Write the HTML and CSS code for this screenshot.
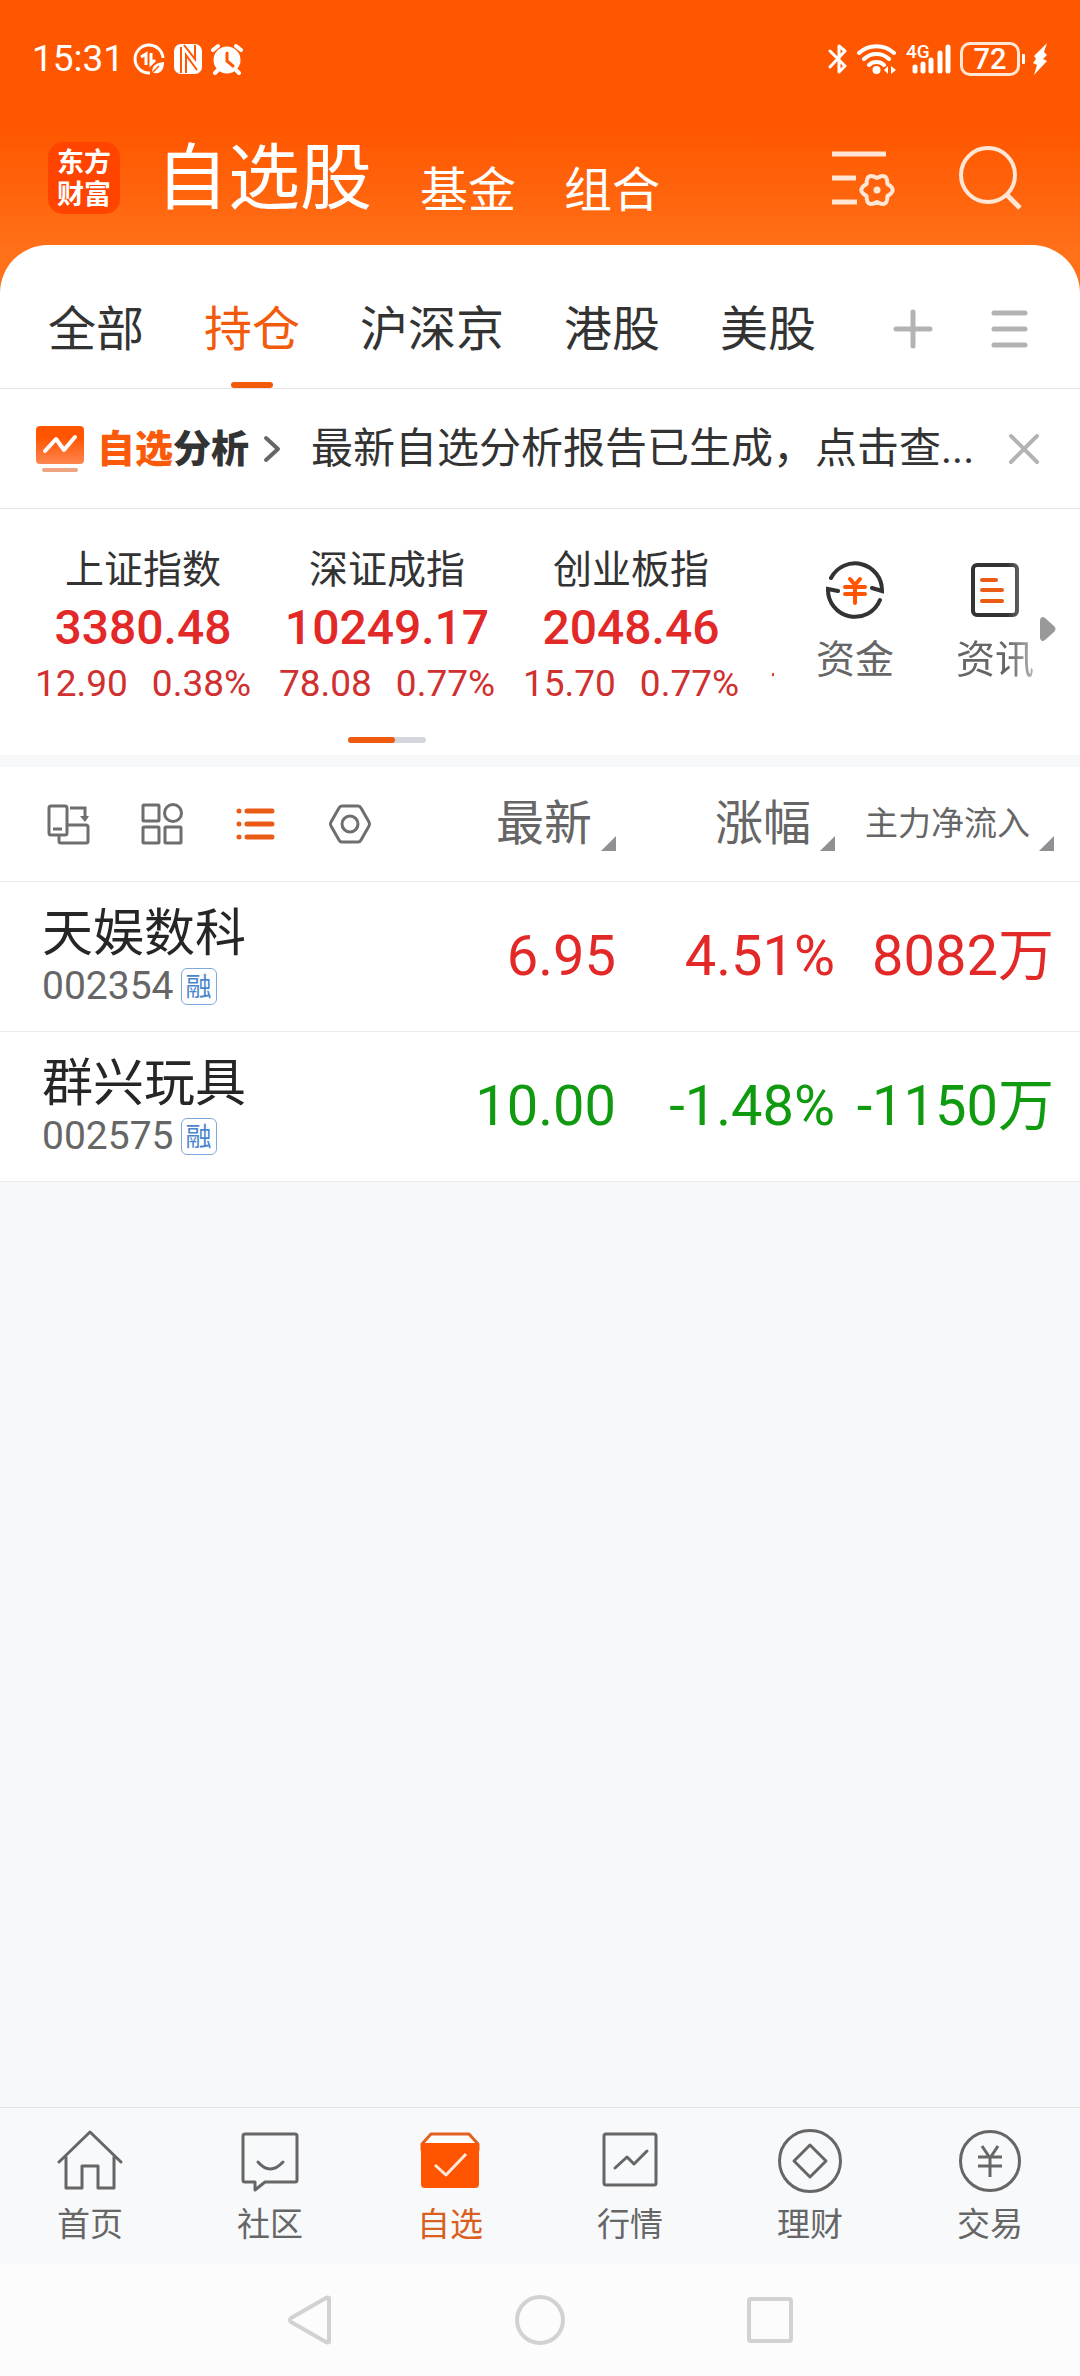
FILE: index.html
```html
<!DOCTYPE html>
<html lang="zh-CN">
<head>
    <meta charset="UTF-8">
    <meta name="viewport" content="width=device-width, initial-scale=1.0">
    <title>自选股</title>
    <link rel="stylesheet" href="styles.css">
</head>
<body>
    <header class="top">
        <div class="status-bar">
            <div class="status-left">
                <span class="time">15:31</span>
                <svg width="32" height="32" viewBox="0 0 32 32" fill="none" stroke="#fff" stroke-width="3">
                    <path d="M30 15A14 14 0 1 0 17 30"/>
                    <path d="M8 14l5-3v11M18 10v11l4-4"/>
                    <path d="M19 30c0-8 4-10 12-11 0 7-3 12-9 11z" fill="#fff" stroke="none"/>
                    <path d="M18 31l8-8" stroke="#ff5700" stroke-width="1.5"/>
                </svg>
                <svg width="28" height="30" viewBox="0 0 28 30">
                    <rect width="28" height="30" rx="7" fill="#fff"/>
                    <path d="M7 3v26M10 1l11 14V1M12 29V11l11 15" stroke="#ff5700" stroke-width="2" fill="none"/>
                </svg>
                <svg width="32" height="32" viewBox="0 0 32 32" fill="none" stroke="#fff" stroke-width="4" stroke-linecap="round">
                    <circle cx="16" cy="17" r="13.500" fill="#fff" stroke="none"/>
                    <path d="M2 7l5-4M30 7l-5-4M7 27l-3 3M25 27l3 3"/>
                    <path d="M16 10v8l6 5" stroke="#ff5700" stroke-width="3"/>
                </svg>
            </div>
            <div class="status-right">
                <svg width="20" height="32" viewBox="0 0 20 32" fill="none" stroke="#fff" stroke-width="3" stroke-linecap="round" stroke-linejoin="round">
                    <path d="M2 8l15 15-6 6V3l6 5L2 24"/>
                </svg>
                <svg width="40" height="32" viewBox="0 0 40 32" fill="none" stroke="#fff" stroke-width="4" stroke-linecap="round">
                    <path d="M2 10a26 26 0 0 1 35 0M7 16a18 18 0 0 1 25 0M12 22a11 11 0 0 1 15 0"/>
                    <circle cx="19.500" cy="27" r="4" fill="#fff" stroke="none"/>
                    <path d="M31 23v8l-4-4zM34 23v8l5-4z" fill="#fff" stroke="none"/>
                </svg>
                <div class="signal">
                    <span class="network">4G</span>
                    <svg width="40" height="32" viewBox="0 0 40 32" stroke="#fff" stroke-width="5" stroke-linecap="round">
                        <path d="M4 24v4M12 21v7M20 17v11M29 10v18M37 4v24"/>
                    </svg>
                </div>
                <div class="battery">72</div>
                <svg width="26" height="34" viewBox="0 0 26 34" fill="#fff">
                    <rect x="0" y="12" width="3" height="10" rx="1"/>
                    <path d="M25 1L12 14l2 3-3 4 4 2-3 10 13-14-4-2 4-4-3-3z"/>
                </svg>
            </div>
        </div>
        <div class="title-bar">
            <div class="logo">东方财富</div>
            <nav class="titles">
                <h1>自选股</h1>
                <a href="#">基金</a>
                <a href="#">组合</a>
            </nav>
            <div class="title-actions">
                <button aria-label="设置">
                    <svg width="64" height="64" viewBox="0 0 64 64" fill="none" stroke="#ffe6d5" stroke-width="5">
                        <path d="M0 8h54M0 32h24M0 56h25"/>
                        <path d="M55.400 50Q55.500 62.200 45 56 34.500 62.200 34.600 50 24 44 34.600 38 34.500 25.800 45 32 55.500 25.800 55.400 38 66 44 55.400 50z" stroke-width="4" stroke-linejoin="round"/>
                        <circle cx="45" cy="44" r="3.500" fill="#ffe6d5" stroke="none"/>
                    </svg>
                </button>
                <button aria-label="搜索">
                    <svg width="64" height="64" viewBox="0 0 64 64" fill="none" stroke="#ffe6d5" stroke-width="4">
                        <circle cx="30" cy="29" r="27"/>
                        <path d="M48 48l14 14" stroke-width="5"/>
                    </svg>
                </button>
            </div>
        </div>
    </header>

    <main class="sheet">
        <nav class="tabs">
            <a href="#">全部</a>
            <a href="#" class="active">持仓</a>
            <a href="#">沪深京</a>
            <a href="#">港股</a>
            <a href="#">美股</a>
            <div class="tab-actions">
                <button aria-label="添加">
                    <svg width="40" height="40" viewBox="0 0 40 40" stroke="#b3b3b3" stroke-width="5" stroke-linecap="round">
                        <path d="M20 3v34M3 20h34"/>
                    </svg>
                </button>
                <button aria-label="菜单">
                    <svg width="40" height="40" viewBox="0 0 40 40" stroke="#b3b3b3" stroke-width="5" stroke-linecap="round">
                        <path d="M5 4h31M5 20h31M5 36h31"/>
                    </svg>
                </button>
            </div>
        </nav>

        <section class="notice">
            <svg width="48" height="48" viewBox="0 0 48 48" fill="none">
                <defs>
                    <linearGradient id="board" x1="0" y1="0" x2="0" y2="1">
                        <stop offset=".3" stop-color="#ff5500"/>
                        <stop offset="1" stop-color="#ff8650"/>
                    </linearGradient>
                </defs>
                <rect x="0" y="1" width="48" height="38" rx="4" fill="url(#board)"/>
                <path d="M9 26l11-12 8 11 11-13" stroke="#fff" stroke-width="4" stroke-linecap="round" stroke-linejoin="round"/>
                <rect x="6" y="43" width="36" height="4" rx="2" fill="#f0a582"/>
            </svg>
            <strong class="notice-title"><span>自选</span>分析</strong>
            <svg class="chevron" width="18" height="28" viewBox="0 0 18 28" fill="none" stroke="#666" stroke-width="4" stroke-linecap="round" stroke-linejoin="round">
                <path d="M3 3l12 11L3 25"/>
            </svg>
            <a href="#" class="notice-text">最新自选分析报告已生成，点击查...</a>
            <button aria-label="关闭">
                <svg width="32" height="32" viewBox="0 0 32 32" stroke="#b3b3b3" stroke-width="4" stroke-linecap="round">
                    <path d="M3 3l26 26M29 3L3 29"/>
                </svg>
            </button>
        </section>

        <section class="market">
            <div class="indexes">
                <div class="index-list">
                    <div class="index">
                        <div class="index-name">上证指数</div>
                        <div class="index-value">3380.48</div>
                        <div class="index-change"><span>12.90</span><span>0.38%</span></div>
                    </div>
                    <div class="index">
                        <div class="index-name">深证成指</div>
                        <div class="index-value">10249.17</div>
                        <div class="index-change"><span>78.08</span><span>0.77%</span></div>
                    </div>
                    <div class="index">
                        <div class="index-name">创业板指</div>
                        <div class="index-value">2048.46</div>
                        <div class="index-change"><span>15.70</span><span>0.77%</span></div>
                    </div>
                    <div class="index index-next">
                        <div class="index-change">1</div>
                    </div>
                </div>
                <div class="pager"><span></span></div>
            </div>
            <div class="shortcuts">
                <a href="#" class="shortcut">
                    <svg width="60" height="60" viewBox="0 0 60 60" fill="none" stroke="#333" stroke-width="4" stroke-linecap="round">
                        <path d="M6 18A27 27 0 0 1 57 31l-10-3"/>
                        <path d="M55 40A27 27 0 0 1 3 29l10 2"/>
                        <path d="M25 19l5 6 5-6M20 27h20M20 34h20M30 26v17" stroke="#ff5500"/>
                    </svg>
                    <span>资金</span>
                </a>
                <a href="#" class="shortcut fade">
                    <svg width="60" height="60" viewBox="0 0 60 60" fill="none" stroke="#333" stroke-width="4" stroke-linecap="round">
                        <rect x="8" y="5" width="44" height="50" rx="4"/>
                        <path d="M17 20h14M17 30h20M17 41h20" stroke="#ea5b16"/>
                    </svg>
                    <span>资讯</span>
                </a>
                <svg class="more" width="16" height="26" viewBox="0 0 16 26" fill="#999">
                    <path d="M0 4Q1-1 5 2l9 8q3 3 0 6l-9 8q-4 3-5-2z"/>
                </svg>
            </div>
        </section>

        <table class="stocks">
            <colgroup>
                <col>
                <col class="col-price">
                <col class="col-price">
                <col class="col-flow">
            </colgroup>
            <thead>
                <tr>
                    <th>
                        <div class="views">
                            <button aria-label="切换横屏">
                                <svg width="44" height="44" viewBox="0 0 44 44" fill="none" stroke="#6e6e6e" stroke-width="3">
                                    <rect x="3" y="4" width="18" height="29" rx="2"/>
                                    <path d="M7 27h9M24 6h15v9M21 23h19q2 0 2 2v14q0 2-2 2H15q-2 0-2-2v-6"/>
                                    <path d="M34 14h9l-4 6z" fill="#6e6e6e" stroke="none"/>
                                </svg>
                            </button>
                            <button aria-label="宫格">
                                <svg width="44" height="44" viewBox="0 0 44 44" fill="none" stroke="#6e6e6e" stroke-width="3">
                                    <rect x="3" y="3" width="16" height="16" rx="1"/>
                                    <circle cx="33" cy="11" r="8.500"/>
                                    <rect x="3" y="25" width="16" height="16" rx="1"/>
                                    <rect x="25" y="25" width="16" height="16" rx="1"/>
                                </svg>
                            </button>
                            <button aria-label="列表">
                                <svg width="44" height="44" viewBox="0 0 44 44" fill="none" stroke="#ea5b16" stroke-width="5" stroke-linecap="round">
                                    <path d="M5 9h0M13 9h25M5 22h0M13 22h25M5 35h0M13 35h25"/>
                                </svg>
                            </button>
                            <button aria-label="设置">
                                <svg width="44" height="44" viewBox="0 0 44 44" fill="none" stroke="#6e6e6e" stroke-width="3" stroke-linejoin="round">
                                    <path d="M14 4h16q2 0 3 2l8 14q1 2 0 4l-8 14q-1 2-3 2H14q-2 0-3-2L3 24q-1-2 0-4l8-14q1-2 3-2z"/>
                                    <circle cx="22" cy="22" r="8"/>
                                </svg>
                            </button>
                        </div>
                    </th>
                    <th><button class="sort">最新<i></i></button></th>
                    <th><button class="sort">涨幅<i></i></button></th>
                    <th><button class="sort sort-long">主力净流入<i></i></button></th>
                </tr>
            </thead>
            <tbody>
                <tr class="up">
                    <td>
                        <div class="stock-name">天娱数科</div>
                        <div class="stock-code">002354<span class="badge">融</span></div>
                    </td>
                    <td>6.95</td>
                    <td>4.51%</td>
                    <td>8082万</td>
                </tr>
                <tr class="down">
                    <td>
                        <div class="stock-name">群兴玩具</div>
                        <div class="stock-code">002575<span class="badge">融</span></div>
                    </td>
                    <td>10.00</td>
                    <td>-1.48%</td>
                    <td>-1150万</td>
                </tr>
            </tbody>
        </table>
    </main>

    <nav class="bottom-nav">
        <a href="#">
            <svg width="66" height="66" viewBox="0 0 66 66" fill="none" stroke="#666" stroke-width="3" stroke-linecap="round" stroke-linejoin="round">
                <path d="M2 34L33 4l31 30M9 29v31h16V38h16v22h16V29"/>
            </svg>
            <span>首页</span>
        </a>
        <a href="#">
            <svg width="66" height="66" viewBox="0 0 66 66" fill="none" stroke="#666" stroke-width="3" stroke-linecap="round" stroke-linejoin="round">
                <path d="M8 6h50q2 0 2 2v44q0 2-2 2H28l-10 8v-8H8q-2 0-2-2V8q0-2 2-2z"/>
                <path d="M21 34q12 14 25 0"/>
            </svg>
            <span>社区</span>
        </a>
        <a href="#" class="active">
            <svg width="66" height="66" viewBox="0 0 66 66" fill="none" stroke-linejoin="round">
                <path d="M5 16l9-10h38l9 10v6H5z" fill="#fff" stroke="#e2601f" stroke-width="3"/>
                <path d="M4 15h58v41q0 4-4 4H8q-4 0-4-4z" fill="#ff5500"/>
                <path d="M18 37l11 10 20-21" stroke="#ffe9dc" stroke-width="3"/>
            </svg>
            <span>自选</span>
        </a>
        <a href="#">
            <svg width="66" height="66" viewBox="0 0 66 66" fill="none" stroke="#666" stroke-width="3" stroke-linecap="round" stroke-linejoin="round">
                <rect x="7" y="6" width="52" height="51" rx="2"/>
                <path d="M18 40l12-11 7 7 13-13"/>
            </svg>
            <span>行情</span>
        </a>
        <a href="#">
            <svg width="66" height="66" viewBox="0 0 66 66" fill="none" stroke="#666" stroke-width="3" stroke-linejoin="round">
                <circle cx="33" cy="33" r="30.500"/>
                <path d="M33 17l16 16-16 16-16-16z"/>
            </svg>
            <span>理财</span>
        </a>
        <a href="#">
            <svg width="66" height="66" viewBox="0 0 66 66" fill="none" stroke="#666" stroke-width="3">
                <circle cx="33" cy="33" r="29.500"/>
                <path d="M25 18l8 12 8-12M21 29h24M21 38h24M33 29v20"/>
            </svg>
            <span>交易</span>
        </a>
    </nav>

    <div class="system-nav">
        <button aria-label="返回">
            <svg width="52" height="52" viewBox="0 0 52 52" fill="none" stroke="#d2d2d2" stroke-width="4" stroke-linejoin="round">
                <path d="M45 4v44q-1 1-3 0L7 28q-2-2 0-4L42 4q2-1 3 0z"/>
            </svg>
        </button>
        <button aria-label="主屏幕">
            <svg width="52" height="52" viewBox="0 0 52 52" fill="none" stroke="#d2d2d2" stroke-width="4">
                <circle cx="26" cy="26" r="23"/>
            </svg>
        </button>
        <button aria-label="最近任务">
            <svg width="52" height="52" viewBox="0 0 52 52" fill="none" stroke="#d2d2d2" stroke-width="4">
                <rect x="5" y="5" width="42" height="42" rx="2"/>
            </svg>
        </button>
    </div>
</body>
</html>
```

FILE: styles.css
```css
* {
    box-sizing: border-box;
}

body {
    margin: 0;
    min-height: 100vh;
    display: flex;
    flex-direction: column;
    background-color: #f6f8fa;
    color: #333;
    font-family: Roboto, "Noto Sans CJK SC", sans-serif;
}

a {
    color: inherit;
    text-decoration: none;
}

button {
    display: block;
    padding: 0;
    border: none;
    background: none;
    color: inherit;
    font: inherit;
    cursor: pointer;
}

svg {
    display: block;
    flex-shrink: 0;
}

/* header */
.top {
    padding-bottom: 48px;
    background: linear-gradient(#ff5700 130px, #ff7018 250px);
    color: #fff;
}

.status-bar {
    height: 118px;
    padding: 0 32px;
    display: flex;
    justify-content: space-between;
    align-items: center;
}

.status-left,
.status-right {
    display: flex;
    align-items: center;
    gap: 9px;
}

.time {
    font-size: 37px;
    line-height: 40px;
}

.signal {
    position: relative;
    padding-left: 5px;
}

.network {
    position: absolute;
    left: 0;
    top: 0;
    font-size: 19px;
    font-weight: 500;
    line-height: 18px;
}

.battery {
    width: 60px;
    height: 34px;
    border: 3px solid #ffe6d5;
    border-radius: 10px;
    font-size: 29px;
    font-weight: 500;
    line-height: 29px;
    text-align: center;
    margin-right: -7px;
}

.title-bar {
    height: 127px;
    padding: 0 58px 8px 48px;
    display: flex;
    align-items: center;
}

.logo {
    width: 72px;
    height: 72px;
    padding: 5px 9px;
    border-radius: 15px;
    background-color: #ff4400;
    font-size: 27px;
    font-weight: 700;
    line-height: 32px;
}

.titles {
    margin-left: 36px;
    padding-bottom: 12px;
    display: flex;
    align-items: flex-end;
    gap: 48px;
    font-family: "Noto Sans CJK SC", sans-serif;
    font-size: 48px;
    line-height: 44px;
}

.titles h1 {
    margin: 0;
    font-size: 72px;
    font-weight: 400;
    line-height: 72px;
}

.title-actions {
    margin-left: auto;
    display: flex;
    gap: 62px;
}

/* tabs */
.sheet {
    margin-top: -48px;
    flex-grow: 1;
}

.tabs {
    height: 144px;
    padding: 0 51px 0 48px;
    display: flex;
    gap: 60px;
    background-color: #fff;
    border-bottom: 1px solid #e3e3e3;
    border-radius: 48px 48px 0 0;
    font-size: 48px;
    line-height: 170px;
}

.tabs a {
    position: relative;
}

.tabs .active {
    color: #f25a0c;
}

.tabs .active::after {
    content: "";
    position: absolute;
    left: 50%;
    bottom: 0;
    width: 42px;
    height: 6px;
    margin-left: -21px;
    border-radius: 3px;
    background-color: #f25a0c;
}

.tab-actions {
    height: 168px;
    margin-left: auto;
    display: flex;
    align-items: center;
    gap: 56px;
}

/* notice */
.notice {
    height: 120px;
    padding: 0 40px 0 36px;
    display: flex;
    align-items: center;
    background-color: #fff;
    border-bottom: 1px solid #e3e3e3;
    line-height: 56px;
}

.notice-title {
    margin-left: 13px;
    font-size: 38px;
    font-weight: 900;
}

.notice-title span {
    color: #fa5a0a;
}

.chevron {
    margin-left: 14px;
}

.notice-text {
    flex: 1;
    min-width: 0;
    margin-left: 30px;
    overflow: hidden;
    white-space: nowrap;
    font-size: 42px;
}

/* market */
.market {
    height: 246px;
    display: flex;
    justify-content: space-between;
    background-color: #fff;
}

.indexes {
    width: 774px;
    padding: 0 21px;
    overflow: hidden;
    text-align: center;
}

.index-list {
    padding-top: 32px;
    display: flex;
}

.index {
    flex: 0 0 244px;
}

.index-next {
    align-self: flex-end;
    padding-left: 16px;
}

.index-name {
    font-size: 39px;
    line-height: 58px;
}

.index-value {
    color: #e32828;
    font-size: 48px;
    font-weight: 500;
    line-height: 58px;
}

.index-change {
    display: flex;
    justify-content: center;
    gap: 24px;
    color: #d03030;
    font-size: 37px;
    line-height: 54px;
}

.index-next .index-change {
    justify-content: flex-start;
}

.pager {
    width: 78px;
    height: 6px;
    margin: 26px auto 0;
    border-radius: 3px;
    background-color: #d3d7dc;
}

.pager span {
    display: block;
    width: 60%;
    height: 6px;
    border-radius: 3px;
    background-color: #f05a10;
}

.shortcuts {
    padding: 51px 24px 0 0;
    display: flex;
    gap: 62px;
}

.shortcut {
    display: flex;
    flex-direction: column;
    align-items: center;
    color: #666;
    font-size: 39px;
    line-height: 80px;
}

.fade {
    -webkit-mask-image: linear-gradient(to right, #000 65%, rgba(0, 0, 0, 0.5));
    mask-image: linear-gradient(to right, #000 65%, rgba(0, 0, 0, 0.5));
}

.more {
    margin: 56px 0 0 -56px;
}

/* stock table */
.stocks {
    width: 100%;
    margin-top: 12px;
    border-collapse: collapse;
    table-layout: fixed;
    background-color: #fff;
}

.col-price {
    width: 219px;
}

.col-flow {
    width: 245px;
}

.stocks tr {
    border-bottom: 1px solid #ebebeb;
}

.stocks th {
    height: 114px;
    padding: 0;
    font-weight: 400;
}

.stocks td {
    height: 150px;
    padding: 0;
    font-size: 56px;
    line-height: 60px;
    text-align: right;
    vertical-align: middle;
    white-space: nowrap;
}

.stocks td:first-child {
    padding-left: 42px;
    text-align: left;
}

.stocks th:last-child,
.stocks td:last-child {
    padding-right: 26px;
}

.views {
    padding-left: 46px;
    display: flex;
    gap: 50px;
}

.sort {
    margin-left: auto;
    display: flex;
    align-items: flex-end;
    gap: 9px;
    color: #666;
    font-size: 48px;
    line-height: 54px;
    white-space: nowrap;
}

.sort-long {
    font-size: 33px;
}

.sort i {
    border-left: 15px solid transparent;
    border-bottom: 15px solid #8f8f94;
}

.stock-name {
    color: #262626;
    font-size: 51px;
    line-height: 60px;
}

.stock-code {
    display: flex;
    align-items: center;
    gap: 7px;
    color: #666;
    font-size: 39px;
    line-height: 44px;
}

.badge {
    width: 36px;
    height: 37px;
    border: 1px solid #7fa9dc;
    border-radius: 6px;
    color: #4a86cc;
    font-size: 26px;
    line-height: 36px;
    text-align: center;
}

.up {
    color: #e32828;
}

.down {
    color: #109a10;
}

/* bottom bars */
.bottom-nav {
    height: 157px;
    padding-top: 20px;
    display: flex;
    background-color: #f8f9fb;
    border-top: 1px solid #e0e0e0;
}

.bottom-nav a {
    flex: 1;
    display: flex;
    flex-direction: column;
    align-items: center;
    color: #666;
    font-size: 33px;
    line-height: 62px;
}

.bottom-nav .active {
    color: #d95f1e;
}

.system-nav {
    height: 112px;
    display: flex;
    justify-content: center;
    align-items: center;
    gap: 178px;
    background-color: #fcfcfc;
}
```
